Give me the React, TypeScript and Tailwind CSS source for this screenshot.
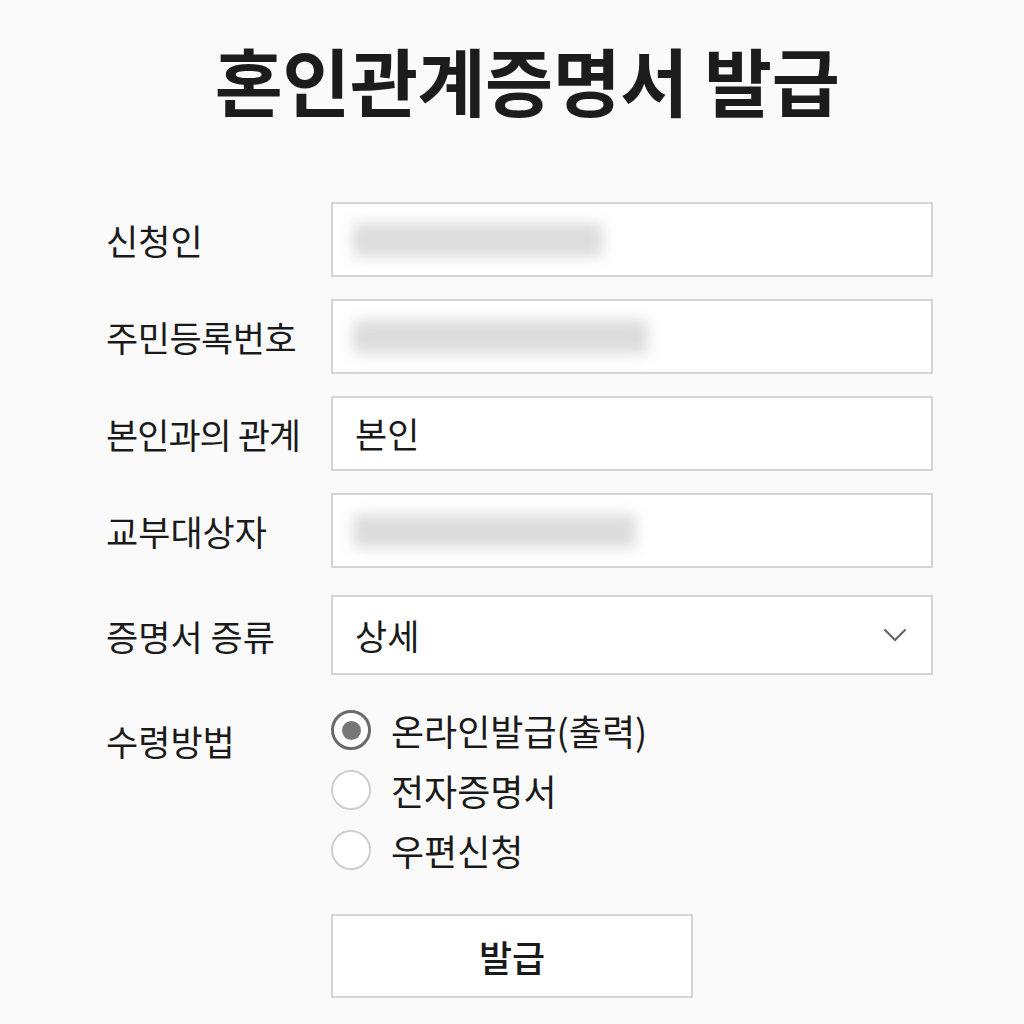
import React from 'react';

const font = { fontFamily: '"Noto Sans CJK KR", "Noto Sans", sans-serif' };

const Blur: React.FC<{ w: string }> = ({ w }) => (
  <div className={`h-[34px] ${w} bg-[#dcdcdc] blur-[7px] rounded-sm`} />
);

const App: React.FC = () => {
  return (
    <div className="min-h-screen w-full bg-[#fafafa] text-[#1a1a1a]" style={font}>
      <div className="w-[1024px] pt-[29px]">
        <h1 className="text-center text-[74px] leading-[100px] font-bold tracking-[-0.5px] text-[#1c1c1c] pl-[30px]">
          혼인관계증명서 발급
        </h1>

        <div className="ml-[106px] w-[827px] mt-[73px] flex flex-col gap-[22px]">
          {/* 신청인 */}
          <div className="flex items-center">
            <div className="w-[225px] text-[35px] leading-none">신청인</div>
            <div className="flex-1 h-[75px] bg-white border-2 border-[#d4d4d4] flex items-center px-[20px]">
              <Blur w="w-[250px]" />
            </div>
          </div>

          <div className="flex items-center">
            <div className="w-[225px] text-[35px] leading-none tracking-[-0.5px]">주민등록번호</div>
            <div className="flex-1 h-[75px] bg-white border-2 border-[#d4d4d4] flex items-center px-[20px]">
              <Blur w="w-[295px]" />
            </div>
          </div>

          <div className="flex items-center">
            <div className="w-[225px] text-[35px] leading-none tracking-[-1px] whitespace-nowrap">본인과의 관계</div>
            <div className="flex-1 h-[75px] bg-white border-2 border-[#d4d4d4] flex items-center px-[22px] text-[35px]">
              본인
            </div>
          </div>

          <div className="flex items-center">
            <div className="w-[225px] text-[35px] leading-none">교부대상자</div>
            <div className="flex-1 h-[75px] bg-white border-2 border-[#d4d4d4] flex items-center px-[20px]">
              <Blur w="w-[283px]" />
            </div>
          </div>

          <div className="flex items-center mt-[5px]">
            <div className="w-[225px] text-[35px] leading-none">증명서 증류</div>
            <div className="flex-1 h-[80px] bg-white border-2 border-[#d4d4d4] flex items-center justify-between pl-[22px] pr-[24px] text-[35px]">
              <span>상세</span>
              <svg width="24" height="14" viewBox="0 0 24 14" fill="none">
                <path d="M1.5 1.5 L12 12 L22.5 1.5" stroke="#666" strokeWidth="2.2" />
              </svg>
            </div>
          </div>

          <div className="flex items-start mt-[13px]">
            <div className="w-[225px] text-[35px] leading-none pt-[13px]">수령방법</div>
            <div className="flex flex-col gap-[20px]">
              <label className="flex items-center gap-[20px] text-[36px] leading-[40px]">
                <span className="w-[40px] h-[40px] rounded-full border-[3px] border-[#6a6a6a] flex items-center justify-center bg-white">
                  <span className="w-[19px] h-[19px] rounded-full bg-[#777]" />
                </span>
                온라인발급(출력)
              </label>
              <label className="flex items-center gap-[20px] text-[36px] leading-[40px]">
                <span className="w-[40px] h-[40px] rounded-full border-2 border-[#cfcfcf] bg-white" />
                전자증명서
              </label>
              <label className="flex items-center gap-[20px] text-[36px] leading-[40px]">
                <span className="w-[40px] h-[40px] rounded-full border-2 border-[#cfcfcf] bg-white" />
                우편신청
              </label>
            </div>
          </div>

          <div className="flex mt-[22px]">
            <div className="w-[225px]" />
            <button className="w-[362px] h-[84px] bg-white border-2 border-[#d4d4d4] text-[36px] font-medium">
              발급
            </button>
          </div>
        </div>
      </div>
    </div>
  );
};

export default App;
